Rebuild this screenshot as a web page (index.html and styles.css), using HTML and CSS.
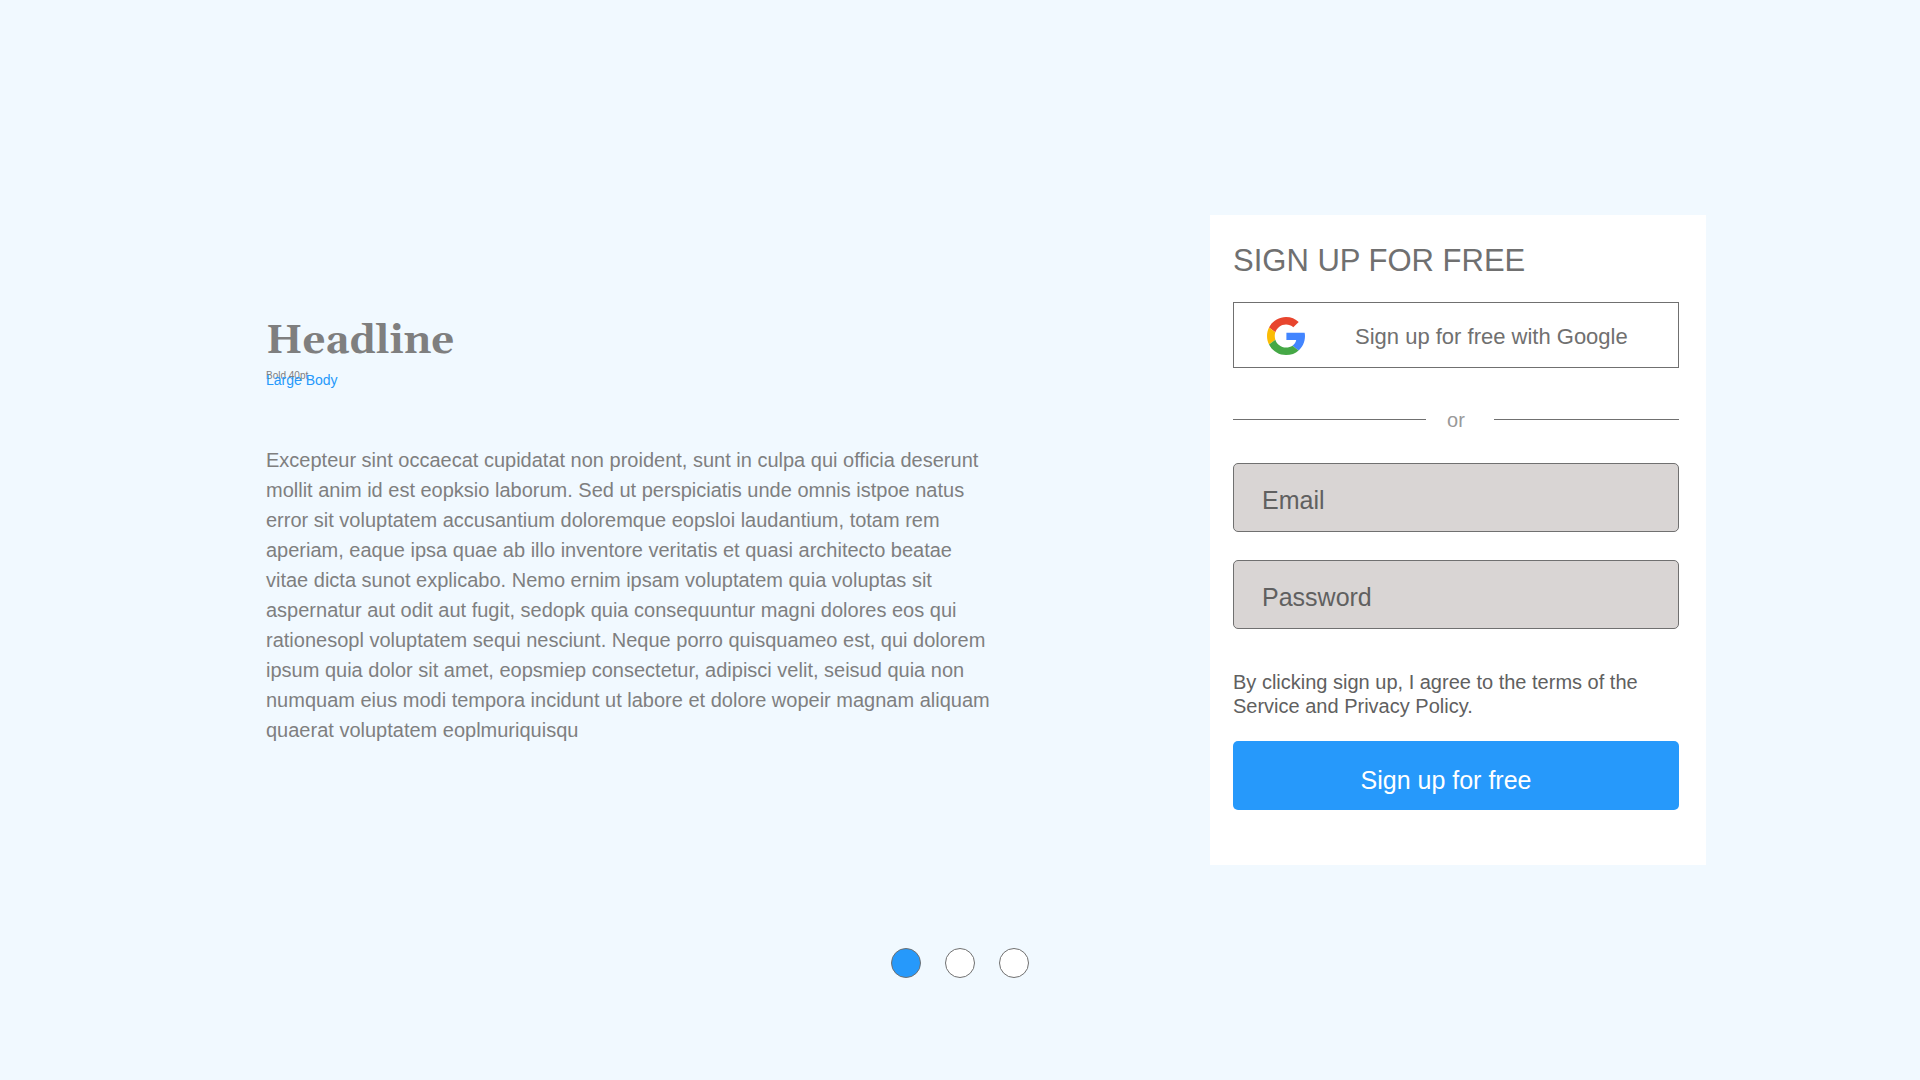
FILE: index.html
```html
<!DOCTYPE html>
<html lang="en">
<head>
  <meta charset="utf-8">
  <meta name="viewport" content="width=device-width, initial-scale=1">
  <title>Sign up for free</title>
  <link rel="stylesheet" href="styles.css">
</head>
<body>
  <main class="page">
    <div class="hero">
      <section class="intro">
        <h1 class="headline">Headline</h1>
        <div class="captions">
          <span class="caption-small">Bold 40pt</span>
          <span class="caption-large">Large Body</span>
        </div>
        <p class="intro-text">Excepteur sint occaecat cupidatat non proident, sunt in culpa qui officia deserunt mollit anim id est eopksio laborum. Sed ut perspiciatis unde omnis istpoe natus error sit voluptatem accusantium doloremque eopsloi laudantium, totam rem aperiam, eaque ipsa quae ab illo inventore veritatis et quasi architecto beatae vitae dicta sunot explicabo. Nemo ernim ipsam voluptatem quia voluptas sit aspernatur aut odit aut fugit, sedopk quia consequuntur magni dolores eos qui rationesopl voluptatem sequi nesciunt. Neque porro quisquameo est, qui dolorem ipsum quia dolor sit amet, eopsmiep consectetur, adipisci velit, seisud quia non numquam eius modi tempora incidunt ut labore et dolore wopeir magnam aliquam quaerat voluptatem eoplmuriquisqu</p>
      </section>

      <form class="card">
        <h2 class="card-title">SIGN UP FOR FREE</h2>
        <button class="google-button" type="button">
          <svg class="google-logo" viewBox="0 0 48 48" aria-hidden="true">
            <path fill="#E8452E" d="M24 9.500c3.540 0 6.710 1.220 9.210 3.600l6.850-6.850C35.900 2.380 30.470 0 24 0 14.620 0 6.510 5.380 2.560 13.220l7.980 6.190C12.430 13.720 17.740 9.500 24 9.500z"/>
            <path fill="#4285FF" d="M47.500 20H24.500v9.200h12.400c-.58 2.960-2.260 5.480-4.780 7.180l7.730 6C44.400 38.300 48 32 48 24c0-1.400-.2-2.700-.5-4z"/>
            <path fill="#FBBC05" d="M10.530 28.590c-.48-1.450-.76-2.990-.76-4.590s.27-3.140.76-4.590l-7.980-6.190C.92 16.460 0 20.120 0 24c0 3.880.92 7.540 2.560 10.780l7.970-6.190z"/>
            <path fill="#45A846" d="M24 48c6.480 0 11.930-2.130 15.890-5.810l-7.730-6c-2.150 1.450-4.920 2.300-8.160 2.300-6.260 0-11.570-4.220-13.470-9.910l-7.980 6.190C6.510 42.620 14.620 48 24 48z"/>
          </svg>
          <span class="google-label">Sign up for free with Google</span>
        </button>
        <div class="divider"><span class="divider-label">or</span></div>
        <div class="fields">
          <input class="field" type="email" placeholder="Email" aria-label="Email">
          <input class="field" type="password" placeholder="Password" aria-label="Password">
        </div>
        <p class="terms">By clicking sign up, I agree to the terms of the Service and Privacy Policy.</p>
        <button class="submit-button" type="submit">Sign up for free</button>
      </form>
    </div>

    <nav class="dots" aria-label="Slides">
      <button class="dot dot-active" type="button" aria-label="Slide 1"></button>
      <button class="dot" type="button" aria-label="Slide 2"></button>
      <button class="dot" type="button" aria-label="Slide 3"></button>
    </nav>
  </main>
</body>
</html>
```
FILE: styles.css
```css
* {
  box-sizing: border-box;
}

body {
  margin: 0;
  background: #f1f9ff;
  color: #7f7f7f;
  font-family: Helvetica, "Liberation Sans", Arial, sans-serif;
}

h1,
h2,
p {
  margin: 0;
  font-weight: normal;
}

button,
input {
  font: inherit;
}

.page {
  display: flex;
  flex-direction: column;
  min-height: 100vh;
  padding: 215px 0 80px;
}

.hero {
  display: flex;
  flex-wrap: wrap;
  justify-content: space-between;
  gap: 48px;
  width: 75%;
  margin-left: 266px;
}

.intro {
  flex: 0 1 730px;
  padding-top: 99px;
}

.headline {
  font-family: Georgia, Gelasio, "DejaVu Serif", serif;
  font-size: 40px;
  font-weight: bold;
  line-height: 56px;
}

.captions {
  display: grid;
  align-items: start;
}

.caption-small,
.caption-large {
  grid-area: 1 / 1;
}

.caption-small {
  font-size: 10px;
  line-height: 12px;
}

.caption-large {
  padding-top: 2px;
  color: #2699fb;
  font-size: 14px;
  line-height: 16px;
}

.intro-text {
  margin-top: 57px;
  font-size: 20px;
  line-height: 30px;
}

.card {
  display: flex;
  flex-direction: column;
  flex: 0 1 496px;
  padding: 26px 27px 55px 23px;
  background: #fff;
  color: #707070;
}

.card-title {
  font-size: 31px;
  line-height: 40px;
}

.google-button {
  display: flex;
  align-items: center;
  gap: 50px;
  height: 66px;
  margin-top: 21px;
  padding: 1px 33px 0;
  border: 1px solid #707070;
  background: #fff;
  color: #707070;
  font-size: 22px;
}

.google-logo {
  flex: none;
  width: 38px;
  height: 38px;
}

.google-label {
  padding-top: 2px;
  white-space: nowrap;
}

.divider {
  display: grid;
  grid-template-columns: 193fr 68px 185fr;
  align-items: center;
  margin-top: 38px;
}

.divider::before,
.divider::after {
  content: "";
  border-top: 1px solid #707070;
}

.divider-label {
  padding: 2px 8px 0 0;
  color: #999;
  font-size: 20px;
  line-height: 24px;
  text-align: center;
}

.fields {
  display: grid;
  gap: 28px;
  margin-top: 31px;
}

.field {
  width: 100%;
  height: 69px;
  padding: 6px 28px 0;
  border: 1px solid #707070;
  border-radius: 5px;
  background: #d9d5d4;
  color: #606060;
  font-size: 25px;
}

.field::placeholder {
  color: #606060;
  opacity: 1;
}

.terms {
  margin-top: 41px;
  color: #606060;
  font-size: 20px;
  line-height: 24px;
}

.submit-button {
  height: 69px;
  margin-top: 23px;
  padding: 10px 20px 0 0;
  border: 0;
  border-radius: 5px;
  background: #2699fb;
  color: #fff;
  font-size: 25px;
}

.dots {
  display: flex;
  justify-content: center;
  gap: 24px;
  margin-top: 83px;
}

.dot {
  width: 30px;
  height: 30px;
  padding: 0;
  border: 1px solid #707070;
  border-radius: 50%;
  background: #fff;
}

.dot-active {
  background: #2699fb;
}
```
